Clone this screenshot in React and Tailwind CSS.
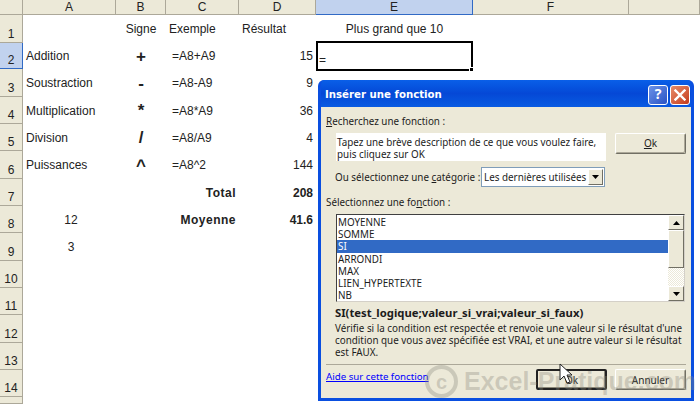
const columns = ['A', 'B', 'C', 'D', 'E', 'F', '']
const rowHeights = [28, 26, 28, 27, 27, 28, 27, 27, 28, 27, 27, 28, 27, 27, 7]

const rows = {
  1: { b: 'Signe', c: 'Exemple', d: 'Résultat', e: 'Plus grand que 10', head: true },
  2: { a: 'Addition', sign: '+', c: '=A8+A9', d: '15' },
  3: { a: 'Soustraction', sign: '-', c: '=A8-A9', d: '9' },
  4: { a: 'Multiplication', sign: '*', c: '=A8*A9', d: '36' },
  5: { a: 'Division', sign: '/', c: '=A8/A9', d: '4' },
  6: { a: 'Puissances', sign: '^', c: '=A8^2', d: '144' },
  7: { total: 'Total', d: '208' },
  8: { center: '12', total: 'Moyenne', d: '41.6' },
  9: { center: '3' },
}

const functions = ['MOYENNE', 'SOMME', 'SI', 'ARRONDI', 'MAX', 'LIEN_HYPERTEXTE', 'NB']

function ColHeader({ label }) {
  const active = label === 'E'
  return (
    <div
      className={`flex items-center justify-center border-r border-b border-[#aca899] text-[12px] leading-none ${
        active ? 'bg-[#c1d2ee] border-b-[#316ac5] border-r-[#316ac5]' : 'bg-[#ece9d8]'
      }`}
    >
      {label}
    </div>
  )
}

function SheetRow({ n }) {
  const r = rows[n] || {}
  return (
    <>
      <div
        className={`flex items-end justify-center pb-[1px] border-r border-b border-[#aca899] text-[12px] leading-[14px] ${
          n === 2 ? 'bg-[#c1d2ee] border-r-[#316ac5] border-b-[#316ac5]' : 'bg-[#ece9d8]'
        }`}
      >
        {n < 15 ? n : ''}
      </div>
      <div className={`flex items-center pl-[3px] ${r.center ? 'justify-center pl-0' : ''}`}>{r.a || r.center}</div>
      <div className="flex items-center justify-center">
        {r.sign ? <span className="font-bold text-[17px] leading-none">{r.sign}</span> : r.b}
      </div>
      <div className={`flex items-center ${r.total ? 'justify-end pr-[3px] font-bold tracking-[0.5px]' : r.head ? 'pl-[3px]' : 'pl-[6px]'}`}>
        {r.total || r.c}
      </div>
      <div className={`flex items-center ${r.head ? 'pl-[3px]' : 'justify-end pr-[3px]'} ${r.total ? 'font-bold' : ''}`}>{r.d}</div>
      <div className="flex items-center justify-center relative">
        {r.e}
        {n === 2 && (
          <div className="absolute inset-x-0 -top-[2px] bottom-[-2px] border-2 border-black bg-white flex items-end pl-[1px] leading-[18px]">
            =
            <span className="absolute -right-[3px] -bottom-[3px] w-[5px] h-[5px] bg-black border border-white" />
          </div>
        )}
      </div>
      <div />
      <div />
    </>
  )
}

function XpButton({ children, active, className = '' }) {
  return (
    <button
      className={`h-[21px] w-[71px] flex items-center justify-center rounded-[2px] bg-[#ece9d8] text-[10px] ${
        active
          ? 'border-2 border-[#222] shadow-[inset_-1px_-1px_0_#8a8778]'
          : 'border border-t-white border-l-white border-r-[#716f64] border-b-[#716f64] shadow-[inset_-1px_-1px_0_#aca899]'
      } ${className}`}
    >
      {children}
    </button>
  )
}

function ScrollBtn({ down }) {
  return (
    <div className="h-[15px] bg-[#ece9d8] border border-t-white border-l-white border-r-[#716f64] border-b-[#716f64] flex items-center justify-center">
      <svg width="7" height="4" viewBox="0 0 7 4">
        <path d={down ? 'M0 0h7L3.500 4z' : 'M0 4h7L3.500 0z'} fill="#000" />
      </svg>
    </div>
  )
}

function InsertDialog() {
  return (
    <div className="absolute left-[318px] top-[80px] w-[376px] h-[321px] flex flex-col rounded-t-[6px] bg-[#0a52df] border-x-[3px] border-b-[3px] border-[#0a4fe0] overflow-hidden text-[9.850px] leading-[12.300px] whitespace-nowrap text-[#1c1c1c] [font-family:'Noto_Sans',sans-serif]">
      <div className="h-[27px] shrink-0 flex items-center justify-between pl-[4px] pr-[1px] pt-[2px] bg-gradient-to-b from-[#0a5fe8] via-[#0548d6] to-[#0a5be2]">
        <span className="text-white font-bold text-[10.200px] mt-[2px] [font-family:'DejaVu_Sans',sans-serif]">Insérer une fonction</span>
        <div className="flex gap-[2px]">
          <div className="w-[20px] h-[20px] rounded-[3px] border border-white bg-gradient-to-br from-[#6c92e8] to-[#2b52c4] flex items-center justify-center text-white font-bold text-[14px]">
            ?
          </div>
          <div className="w-[20px] h-[20px] rounded-[3px] border border-white bg-gradient-to-br from-[#e78b68] to-[#c4391a] flex items-center justify-center">
            <svg width="12" height="12" viewBox="0 0 12 12">
              <path d="M1.500 1.500l9 9M10.500 1.500l-9 9" stroke="#fff" strokeWidth="2.400" strokeLinecap="square" />
            </svg>
          </div>
        </div>
      </div>

      <div className="flex-1 flex flex-col bg-[#ece9d8] pl-[5px]">
        <div className="mt-[7px] h-[14px] leading-[14px]">
          <u>R</u>echerchez une fonction :
        </div>

        <div className="mt-[5px] flex items-start pl-[10px]">
          <div className="w-[270px] h-[28px] bg-white pl-[1px] pt-[3px]">
            Tapez une brève description de ce que vous voulez faire,
            <br />
            puis cliquez sur OK
          </div>
          <XpButton className="ml-[9px] h-[20px]">
            <span>
              <u>O</u>k
            </span>
          </XpButton>
        </div>

        <div className="mt-[6px] ml-[9px] w-[270px] h-[20px] flex items-center justify-between">
          <span>
            Ou sélectionnez une <u>c</u>atégorie :
          </span>
          <div className="w-[124px] h-[20px] bg-white border border-[#7f9db9] flex items-center justify-between pl-[2px] pr-[1px]">
            Les dernières utilisées
            <div className="w-[15px] h-[16px] bg-[#ece9d8] border border-t-white border-l-white border-r-[#716f64] border-b-[#716f64] flex items-center justify-center">
              <svg width="7" height="4" viewBox="0 0 7 4">
                <path d="M0 0h7L3.500 4z" fill="#000" />
              </svg>
            </div>
          </div>
        </div>

        <div className="mt-[8px] h-[14px] leading-[14px]">
          Sélectionnez une fo<u>n</u>ction :
        </div>

        <div className="mt-[5px] ml-[10px] w-[349px] h-[88px] flex bg-white border border-t-[#404040] border-l-[#404040] border-r-[#d4d0c8] border-b-[#d4d0c8]">
          <div className="flex-1 pt-[1px]">
            {functions.map(f => (
              <div
                key={f}
                className={`h-[12.200px] leading-[12.200px] pl-[1px] ${f === 'SI' ? 'bg-[#316ac5] text-white' : ''}`}
              >
                {f}
              </div>
            ))}
          </div>
          <div className="w-[16px] flex flex-col bg-[repeating-conic-gradient(#ece9d8_0%_25%,#fff_0%_50%)] bg-[length:2px_2px]">
            <ScrollBtn />
            <div className="h-[38px] bg-[#ece9d8] border border-t-white border-l-white border-r-[#716f64] border-b-[#716f64]" />
            <div className="flex-1" />
            <ScrollBtn down />
          </div>
        </div>

        <div className="mt-[4px] ml-[9px] h-[14px] leading-[14px] text-[11.300px] font-bold">SI(test_logique;valeur_si_vrai;valeur_si_faux)</div>
        <div className="mt-[1.500px] ml-[9px]">
          Vérifie si la condition est respectée et renvoie une valeur si le résultat d'une
          <br />
          condition que vous avez spécifiée est VRAI, et une autre valeur si le résultat
          <br />
          est FAUX.
        </div>

        <div className="mt-[6px] mr-[5px] h-[1px] bg-[#aca899]" />

        <div className="flex items-start justify-between pr-[5px] mt-[4px]">
          <a className="text-[#0000ff] underline mt-[2px] text-[9.700px]">Aide sur cette fonction</a>
          <div className="flex gap-[8px]">
            <XpButton active>Ok</XpButton>
            <XpButton>Annuler</XpButton>
          </div>
        </div>
      </div>
    </div>
  )
}

export default function App() {
  return (
    <div className="relative w-[700px] h-[404px] overflow-hidden bg-white text-[#222] text-[12px] [font-family:'Liberation_Sans',Arial,sans-serif]">
      <div className="grid grid-cols-[23px_93px_50px_73px_77px_157px_156px_71px] grid-rows-[15px_28px_26px_28px_27px_27px_28px_27px_27px_28px_27px_27px_28px_27px_27px_7px]">
        <div className="bg-[#ece9d8] border-r border-b border-[#aca899]" />
        {columns.map((c, i) => (
          <ColHeader key={i} label={c} />
        ))}
        {rowHeights.map((_, i) => (
          <SheetRow key={i} n={i + 1} />
        ))}
      </div>

      <InsertDialog />

      {/* watermark */}
      <div className="absolute left-[425px] top-[365px] flex items-center gap-[6px] whitespace-nowrap text-[#8d8b80]/35 pointer-events-none">
        <div className="w-[33px] h-[33px] rounded-full border-[4px] border-current flex items-center justify-center font-bold text-[20px] leading-none">
          c
        </div>
        <span className="font-bold text-[25px] leading-none">Excel-Pratique.com</span>
      </div>

      {/* mouse pointer */}
      <svg className="absolute left-[559px] top-[363px]" width="14" height="22" viewBox="0 0 14 22">
        <path d="M1 1v16l4-4 3 7 3-1-3-7h5z" fill="#fff" stroke="#222" strokeWidth="1" />
      </svg>
    </div>
  )
}
